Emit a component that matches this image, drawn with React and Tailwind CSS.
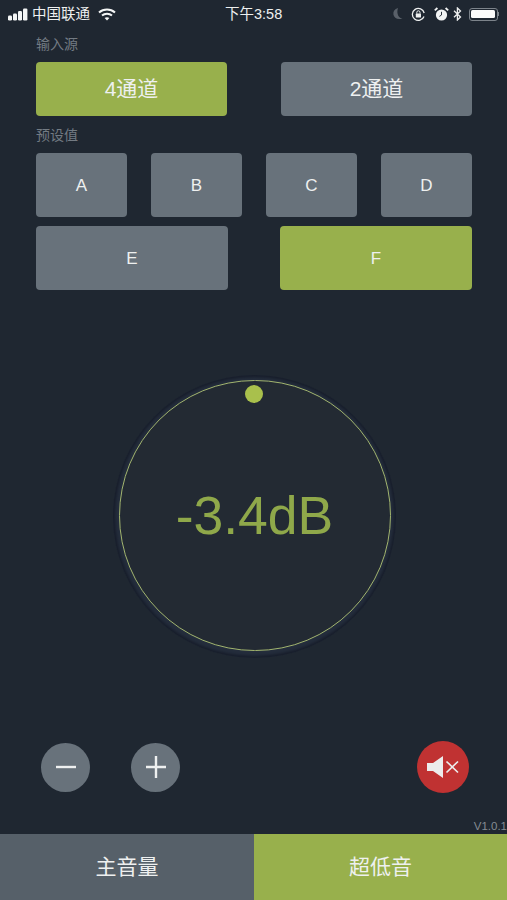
import React from "react";

const FONT = { fontFamily: '"Liberation Sans", "Noto Sans CJK SC", sans-serif' };

function Btn({ children, active, className = "" }) {
  return (
    <div className={`flex items-center justify-center rounded-[4px] text-[#eef0f0] ${active ? "bg-[#98b04c]" : "bg-[#68727b]"} ${className}`}>
      {children}
    </div>
  );
}

function Signal() {
  return (
    <svg width="20" height="13" viewBox="0 0 20 13" fill="#f4f6f6">
      <rect x="0" y="7.5" width="4" height="5" rx="1.2" />
      <rect x="5" y="5.5" width="4" height="7" rx="1.2" />
      <rect x="10" y="3" width="4" height="9.5" rx="1.2" />
      <rect x="15" y="0.5" width="4.4" height="12" rx="1.2" />
    </svg>
  );
}

function Wifi() {
  return (
    <svg width="18" height="13" viewBox="0 0 18 13" fill="none" stroke="#f4f6f6" strokeWidth="2">
      <path d="M1 4.5C5.5 0.5 12.5 0.5 17 4.5" />
      <path d="M4 7.6C6.8 5.2 11.2 5.2 14 7.6" />
      <path d="M9 12.5L6.6 10C8 9 10 9 11.4 10Z" fill="#f4f6f6" stroke="none" />
    </svg>
  );
}

function Moon() {
  return (
    <svg width="12" height="14" viewBox="0 0 12 14">
      <path d="M6 1C2.5 2 1 4.5 1.4 7.5C2 11 5.5 13 10.5 11.5C6.5 11 4.2 6.5 6 1Z" fill="#596069" />
    </svg>
  );
}

function RotLock() {
  return (
    <svg width="15" height="15" viewBox="0 0 15 15" fill="none">
      <path d="M13 9.5A6 6 0 1 1 13.2 6" stroke="#eef0f0" strokeWidth="1.3" />
      <rect x="4.8" y="6.6" width="5.2" height="4" rx="0.6" fill="#eef0f0" />
      <path d="M5.8 6.6V5.4a1.6 1.6 0 0 1 3.2 0v1.2" stroke="#eef0f0" strokeWidth="1" />
    </svg>
  );
}

function Alarm() {
  return (
    <svg width="15" height="15" viewBox="0 0 15 15" fill="none">
      <circle cx="7.5" cy="8" r="5.6" fill="#f2f4f4" />
      <path d="M7.5 4.8V8L5.4 9.4" stroke="#2a323b" strokeWidth="1" />
      <path d="M0.8 3.4L3.4 1M14.2 3.4L11.6 1" stroke="#f2f4f4" strokeWidth="1.8" />
    </svg>
  );
}

function Bluetooth() {
  return (
    <svg width="9" height="14" viewBox="0 0 9 14" fill="none" stroke="#eef0f0" strokeWidth="1.3">
      <path d="M1 3.8L7.5 10L4.4 13V1L7.5 4L1 10.2" />
    </svg>
  );
}

function Battery() {
  return (
    <div className="flex items-center">
      <div className="w-[29px] h-[13px] rounded-[3px] border border-[#7c838a] p-[1.5px]">
        <div className="w-full h-full rounded-[1.5px] bg-[#fbfbfb]" />
      </div>
      <div className="w-[1.5px] h-[4px] bg-[#7c838a]" />
    </div>
  );
}

function StatusBar() {
  return (
    <div className="relative h-[28px] shrink-0 flex items-center justify-between pl-[8px] pr-[8px] text-[#eef0f0] text-[14.5px]">
      <div className="flex items-center">
        <Signal />
        <span className="ml-[4px] leading-none">中国联通</span>
        <span className="ml-[8px] flex"><Wifi /></span>
      </div>
      <div className="absolute left-[225px] top-[5px] text-[14.5px] leading-[18px]">下午3:58</div>
      <div className="flex items-center">
        <Moon />
        <span className="ml-[7px] flex"><RotLock /></span>
        <span className="ml-[8px] flex"><Alarm /></span>
        <span className="ml-[4px] flex"><Bluetooth /></span>
        <span className="ml-[7px] flex"><Battery /></span>
      </div>
    </div>
  );
}

function Knob() {
  return (
    <div className="relative w-[283px] h-[283px] rounded-full bg-[#242d3c] flex items-center justify-center shadow-[inset_0_0_3px_2px_#171d2a]">
      <div className="mb-[2px] w-[272px] h-[271px] rounded-full bg-[#232a33] border-[1.5px] border-[#a2b56f] flex items-center justify-center">
        <span className="text-[#8fa84a] text-[53.5px] leading-none">-3.4dB</span>
      </div>
      <div className="absolute left-[132px] top-[10px] w-[18px] h-[18px] rounded-full bg-[#a9c04c]" />
    </div>
  );
}

function RoundBtn({ children }) {
  return (
    <div className="w-[49px] h-[49px] rounded-full bg-[#68727b] flex items-center justify-center">
      {children}
    </div>
  );
}

export default function App() {
  return (
    <div className="w-[507px] h-[900px] bg-[#1f2731] flex flex-col overflow-hidden" style={FONT}>
      <StatusBar />
      <div className="pl-[36px] pr-[35px] shrink-0">
        <div className="mt-[8px] h-[16px] leading-[16px] text-[14px] text-[#737b83]">输入源</div>
        <div className="mt-[10px] flex justify-between text-[21px]">
          <Btn active className="w-[191px] h-[54px]">4通道</Btn>
          <Btn className="w-[191px] h-[54px]">2通道</Btn>
        </div>
        <div className="mt-[11px] h-[16px] leading-[16px] text-[14px] text-[#737b83]">预设值</div>
        <div className="mt-[10px] flex justify-between text-[17px]">
          <Btn className="w-[91px] h-[64px] pt-[2px]">A</Btn>
          <Btn className="w-[91px] h-[64px] pt-[2px]">B</Btn>
          <Btn className="w-[91px] h-[64px] pt-[2px]">C</Btn>
          <Btn className="w-[91px] h-[64px] pt-[2px]">D</Btn>
        </div>
        <div className="mt-[9px] flex justify-between text-[17px]">
          <Btn className="w-[192px] h-[64px] pt-[2px]">E</Btn>
          <Btn active className="w-[192px] h-[64px] pt-[2px]">F</Btn>
        </div>
      </div>
      <div className="mt-[85px] pl-[113px] shrink-0">
        <Knob />
      </div>
      <div className="mt-[83px] flex items-center pl-[41px] pr-[38px] shrink-0">
        <RoundBtn>
          <svg width="22" height="22" viewBox="0 0 22 22" stroke="#eef0f0" strokeWidth="2.4"><path d="M1 11H21" /></svg>
        </RoundBtn>
        <div className="ml-[41px]">
          <RoundBtn>
            <svg width="22" height="22" viewBox="0 0 22 22" stroke="#eef0f0" strokeWidth="2.4"><path d="M1 11H21M11 0V22" /></svg>
          </RoundBtn>
        </div>
        <div className="ml-auto w-[52px] h-[52px] rounded-full bg-[#c03232] flex items-center justify-center">
          <svg width="32" height="22" viewBox="0 0 32 22">
            <path d="M0 7H6L16 0V22L6 15H0Z" fill="#ececec" />
            <path d="M19.5 5.5L31 16.5M31 5.5L19.5 16.5" stroke="#ececec" strokeWidth="1.7" />
          </svg>
        </div>
      </div>
      <div className="flex-1 flex items-end justify-end pb-[1px]">
        <span className="text-[11.5px] leading-[13px] text-[#848b92]">V1.0.1</span>
      </div>
      <div className="h-[66px] shrink-0 flex text-[21px]">
        <div className="w-[254px] bg-[#566069] flex items-center justify-center text-[#eef0f0]">主音量</div>
        <div className="flex-1 bg-[#98b04c] flex items-center justify-center text-[#eef0f0]">超低音</div>
      </div>
    </div>
  );
}
